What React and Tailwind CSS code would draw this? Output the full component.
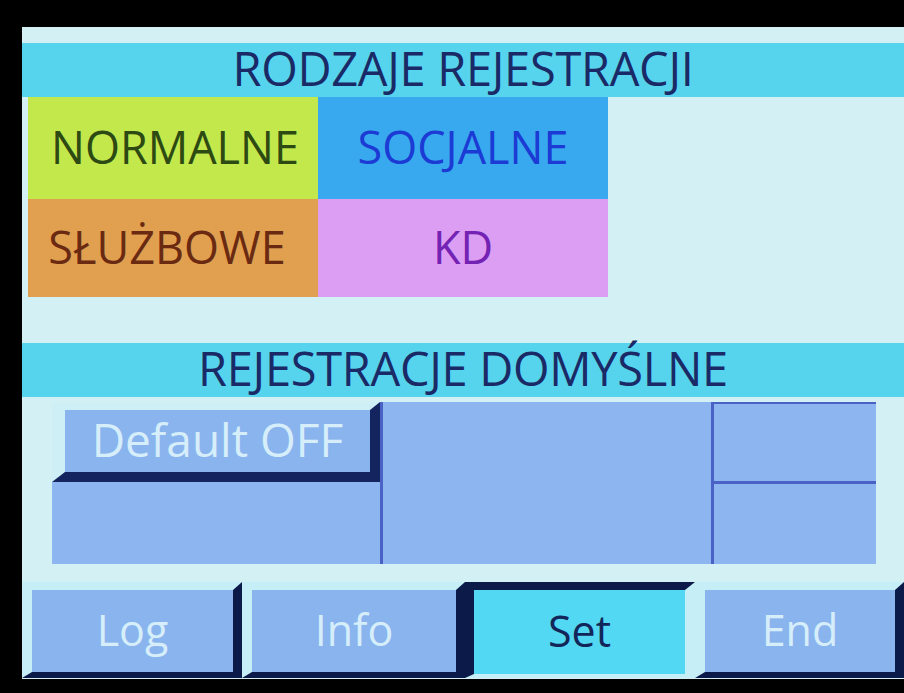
import React from "react";

const font = { fontFamily: '"Open Sans", "Noto Sans", sans-serif' };

const NavButton = ({ label, pressed, className }) =>
  pressed ? (
    <div
      className={`flex items-center justify-center h-full border-t-[8px] border-l-[9px] border-r-[10px] border-b-[4px] border-t-[#0c1a4a] border-l-[#0c1a4a] border-r-[#c6eef6] border-b-[#c6eef6] bg-[#52d8f2] text-[#13265a] ${className}`}
    >
      <span className="text-[43px] leading-none -mt-1">{label}</span>
    </div>
  ) : (
    <div
      className={`flex items-center justify-center h-full border-t-[8px] border-l-[10px] border-r-[9px] border-b-[6px] border-t-[#c6eef6] border-l-[#c6eef6] border-r-[#0c1a4a] border-b-[#0c1a4a] bg-[#8ab4ee] text-[#d6eefa] ${className}`}
    >
      <span className="text-[43px] leading-none -mt-1">{label}</span>
    </div>
  );

export default function App() {
  return (
    <div className="w-[904px] h-[693px] bg-black overflow-hidden pt-[27px] pl-[22px]" style={font}>
      <div className="w-[882px] h-[652px] bg-[#d3f1f5] flex flex-col pt-[16px]">
        {/* header 1 */}
        <div className="h-[54px] bg-[#56d4ee] flex items-center justify-center text-[#1a2a66] text-[47px] leading-none tracking-[-0.3px]">
          <span className="-mt-1">RODZAJE REJESTRACJI</span>
        </div>

        {/* types grid */}
        <div className="ml-[6px] grid grid-cols-[290px_290px] grid-rows-[102px_98px]">
          <div className="bg-[#c3e84c] flex items-center justify-center text-[#2c4a12] text-[45px] leading-none">
            <span className="-mt-1 ml-1">NORMALNE</span>
          </div>
          <div className="bg-[#38a9ee] flex items-center justify-center text-[#1c3ad4] text-[45px] leading-none">
            <span className="-mt-1">SOCJALNE</span>
          </div>
          <div className="bg-[#e0a050] flex items-center justify-center text-[#6a2a12] text-[45px] leading-none">
            <span className="-mt-1 -ml-3">SŁUŻBOWE</span>
          </div>
          <div className="bg-[#dc9ef2] flex items-center justify-center text-[#7322b4] text-[45px] leading-none">
            <span className="-mt-1">KD</span>
          </div>
        </div>

        {/* header 2 */}
        <div className="mt-[46px] h-[54px] bg-[#56d4ee] flex items-center justify-center text-[#1a2a66] text-[47px] leading-none tracking-[-0.3px]">
          <span className="-mt-1">REJESTRACJE DOMYŚLNE</span>
        </div>

        {/* defaults panel */}
        <div className="mt-[5px] ml-[30px] flex h-[162px]">
          <div className="w-[328px] flex flex-col">
            <div className="h-[80px] border-t-[8px] border-l-[13px] border-r-[10px] border-b-[10px] border-t-[#cdeff5] border-l-[#cdeff5] border-r-[#14245e] border-b-[#14245e] bg-[#8ab4ee] flex items-center justify-center text-[#d6eefa] text-[46px] leading-none">
              <span className="-mt-1">Default OFF</span>
            </div>
            <div className="flex-1 bg-[#8db5ef]"></div>
          </div>
          <div className="w-[331px] bg-[#8db5ef] border-l-[3px] border-[#4a62c6]"></div>
          <div className="w-[165px] flex flex-col bg-[#8db5ef] border-l-[3px] border-[#4a62c6]">
            <div className="h-[82px] border-t-[2px] border-b-[3px] border-[#4a62c6]"></div>
            <div className="flex-1"></div>
          </div>
        </div>

        {/* nav */}
        <div className="mt-[18px] h-[96px] flex">
          <NavButton label="Log" className="w-[220px]" />
          <NavButton label="Info" className="w-[223px]" />
          <NavButton label="Set" pressed className="w-[230px]" />
          <NavButton label="End" className="w-[209px]" />
        </div>
      </div>
    </div>
  );
}
